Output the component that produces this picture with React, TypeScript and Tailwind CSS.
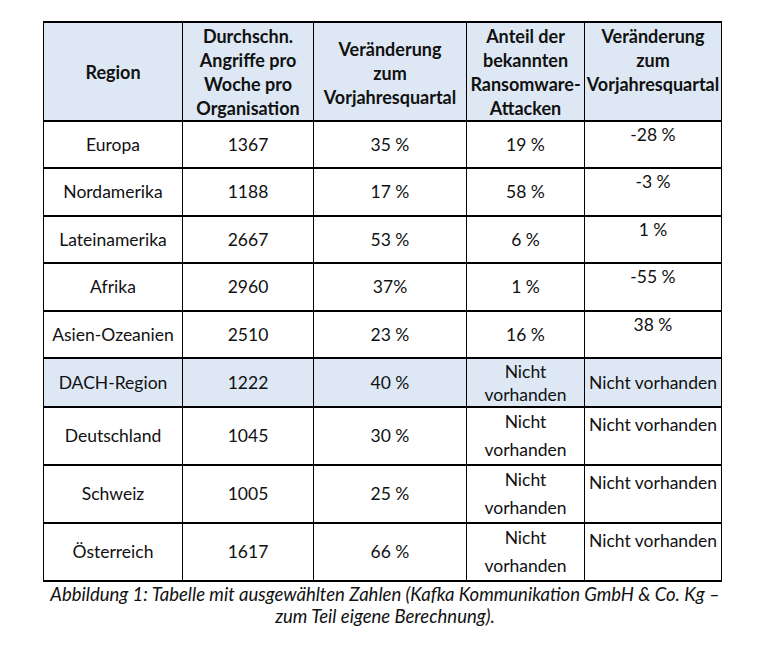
const rows = [
  { region: 'Europa', attacks: '1367', change: '35 %', share: '19 %', last: '-28 %', h: 'h-[47px]' },
  { region: 'Nordamerika', attacks: '1188', change: '17 %', share: '58 %', last: '-3 %', h: 'h-[48px]' },
  { region: 'Lateinamerika', attacks: '2667', change: '53 %', share: '6 %', last: '1 %', h: 'h-[47px]' },
  { region: 'Afrika', attacks: '2960', change: '37%', share: '1 %', last: '-55 %', h: 'h-[48px]' },
  { region: 'Asien-Ozeanien', attacks: '2510', change: '23 %', share: '16 %', last: '38 %', h: 'h-[47px]' },
];

const lowerRows = [
  { region: 'Deutschland', attacks: '1045', change: '30 %' },
  { region: 'Schweiz', attacks: '1005', change: '25 %' },
  { region: 'Österreich', attacks: '1617', change: '66 %' },
];

const cell = 'border-x border-y-2 border-black text-center p-0';

export default function App() {
  return (
    <div className="w-[770px] h-[645px] bg-white text-[#111] font-['Lato','Liberation_Sans',sans-serif] text-[17.5px]">
      <div className="pl-[43px] pt-[21px]">
        <table className="border-collapse table-fixed w-[678px]">
          <colgroup>
            <col className="w-[139px]" />
            <col className="w-[131px]" />
            <col className="w-[153px]" />
            <col className="w-[118px]" />
            <col className="w-[137px]" />
          </colgroup>
          <thead>
            <tr className="h-[99px] bg-[#dde8f4] font-bold text-[18px] leading-[24px]">
              <th className={cell}>Region</th>
              <th className={cell}>
                Durchschn.
                <br />
                Angriffe pro
                <br />
                Woche pro
                <br />
                Organisation
              </th>
              <th className={`${cell} pt-[2px]`}>
                Veränderung
                <br />
                zum
                <br />
                Vorjahresquartal
              </th>
              <th className={cell}>
                Anteil der
                <br />
                bekannten
                <br />
                Ransomware-
                <br />
                Attacken
              </th>
              <th className={`${cell} align-top pt-[1px] whitespace-nowrap`}>
                Veränderung
                <br />
                zum
                <br />
                Vorjahresquartal
              </th>
            </tr>
          </thead>
          <tbody className="leading-[22px]">
            {rows.map((r) => (
              <tr key={r.region} className={r.h}>
                <td className={cell}>{r.region}</td>
                <td className={cell}>{r.attacks}</td>
                <td className={cell}>{r.change}</td>
                <td className={cell}>{r.share}</td>
                <td className={`${cell} align-top pt-[2px]`}>{r.last}</td>
              </tr>
            ))}
            <tr className="h-[49px] bg-[#dde8f4]">
              <td className={cell}>DACH-Region</td>
              <td className={cell}>1222</td>
              <td className={cell}>40 %</td>
              <td className={`${cell} leading-[23px]`}>
                Nicht
                <br />
                vorhanden
              </td>
              <td className={`${cell} whitespace-nowrap`}>Nicht vorhanden</td>
            </tr>
            {lowerRows.map((r) => (
              <tr key={r.region} className="h-[58px]">
                <td className={cell}>{r.region}</td>
                <td className={cell}>{r.attacks}</td>
                <td className={cell}>{r.change}</td>
                <td className={`${cell} leading-[28px]`}>
                  Nicht
                  <br />
                  vorhanden
                </td>
                <td className={`${cell} align-top pt-[6px] whitespace-nowrap`}>Nicht vorhanden</td>
              </tr>
            ))}
          </tbody>
        </table>
      </div>
      <p className="mt-[1px] w-[770px] text-center italic leading-[22px] text-[18.5px]">
        Abbildung 1: Tabelle mit ausgewählten Zahlen (Kafka Kommunikation GmbH &amp; Co. Kg –
        <br />
        zum Teil eigene Berechnung).
      </p>
    </div>
  );
}
